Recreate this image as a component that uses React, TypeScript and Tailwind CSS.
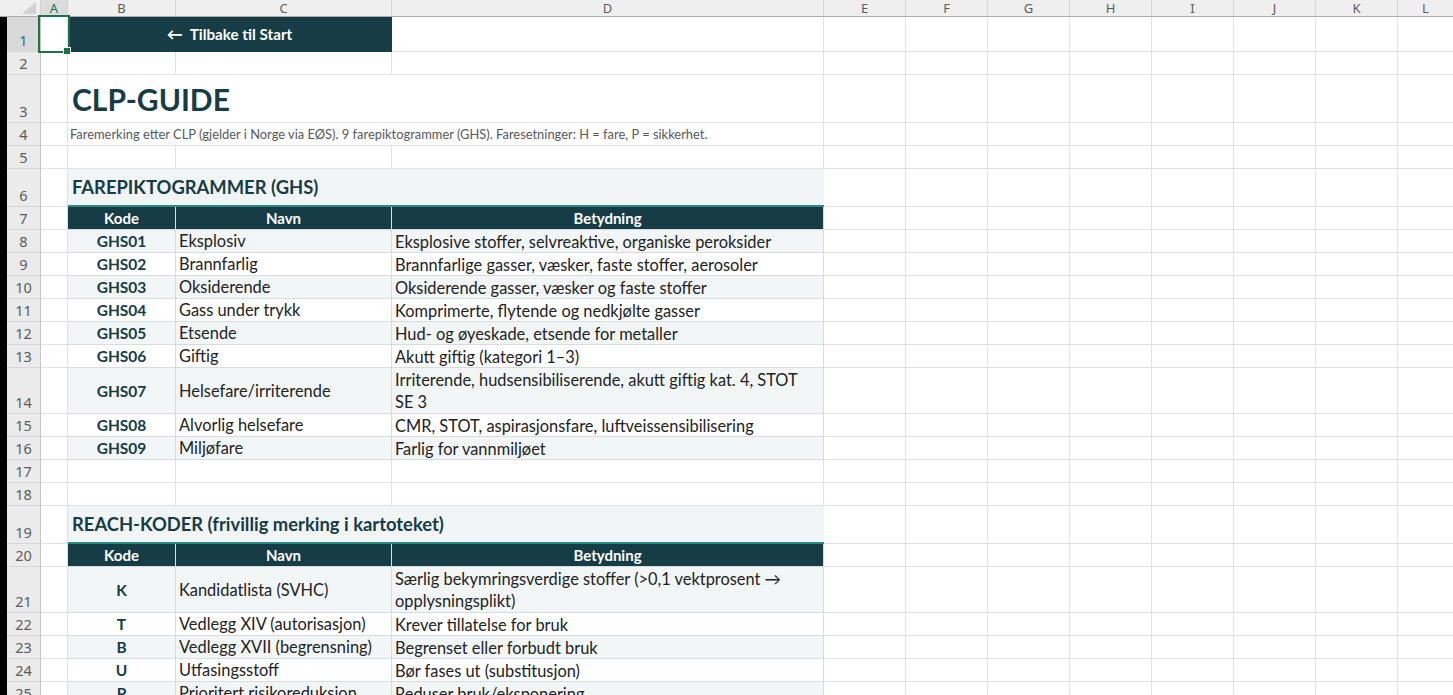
import React from "react";
import clsx from "clsx";

const DARK = "bg-[#163c45]";
const CELL_FONT = { fontFamily: "Lato, 'Liberation Sans', sans-serif" };

type GhsRow = { kode: string; navn: string; betydning: string[] };

const ghsRows: GhsRow[] = [
  { kode: "GHS01", navn: "Eksplosiv", betydning: ["Eksplosive stoffer, selvreaktive, organiske peroksider"] },
  { kode: "GHS02", navn: "Brannfarlig", betydning: ["Brannfarlige gasser, væsker, faste stoffer, aerosoler"] },
  { kode: "GHS03", navn: "Oksiderende", betydning: ["Oksiderende gasser, væsker og faste stoffer"] },
  { kode: "GHS04", navn: "Gass under trykk", betydning: ["Komprimerte, flytende og nedkjølte gasser"] },
  { kode: "GHS05", navn: "Etsende", betydning: ["Hud- og øyeskade, etsende for metaller"] },
  { kode: "GHS06", navn: "Giftig", betydning: ["Akutt giftig (kategori 1–3)"] },
  {
    kode: "GHS07",
    navn: "Helsefare/irriterende",
    betydning: ["Irriterende, hudsensibiliserende, akutt giftig kat. 4, STOT", "SE 3"],
  },
  { kode: "GHS08", navn: "Alvorlig helsefare", betydning: ["CMR, STOT, aspirasjonsfare, luftveissensibilisering"] },
  { kode: "GHS09", navn: "Miljøfare", betydning: ["Farlig for vannmiljøet"] },
];

const reachRows: GhsRow[] = [
  {
    kode: "K",
    navn: "Kandidatlista (SVHC)",
    betydning: ["Særlig bekymringsverdige stoffer (>0,1 vektprosent →", "opplysningsplikt)"],
  },
  { kode: "T", navn: "Vedlegg XIV (autorisasjon)", betydning: ["Krever tillatelse for bruk"] },
  { kode: "B", navn: "Vedlegg XVII (begrensning)", betydning: ["Begrenset eller forbudt bruk"] },
  { kode: "U", navn: "Utfasingsstoff", betydning: ["Bør fases ut (substitusjon)"] },
  { kode: "P", navn: "Prioritert risikoreduksjon", betydning: ["Reduser bruk/eksponering"] },
];

const tailCols = ["E", "F", "G", "H", "I", "J", "K"];

const Tail = () => (
  <>
    {tailCols.map((c) => (
      <div key={c} className="w-[82px] shrink-0 border-r border-b border-[#e1e1e1]" />
    ))}
    <div className="flex-1 border-b border-[#e1e1e1]" />
  </>
);

const RowShell = ({
  n,
  h,
  selected = false,
  children,
}: {
  n: number;
  h: string;
  selected?: boolean;
  children: React.ReactNode;
}) => (
  <div className={clsx("flex shrink-0", h)}>
    <div
      className={clsx(
        "w-[34px] shrink-0 flex items-end justify-center border-r border-r-[#c4c4c4] border-b border-b-[#d6d6d6] text-[14.5px] leading-[20px] pb-[1px]",
        selected ? "bg-[#d9d9d9] text-[#1e6e8a]" : "bg-[#ebebeb] text-[#5c5c5c]"
      )}
      style={{ fontFamily: "'Noto Sans', sans-serif" }}
    >
      {n}
    </div>
    <div className="w-[27px] shrink-0 border-r border-b border-[#e1e1e1]" />
    {children}
    <Tail />
  </div>
);

const BlankBCD = () => (
  <>
    <div className="w-[108px] shrink-0 border-r border-b border-[#e1e1e1]" />
    <div className="w-[216px] shrink-0 border-r border-b border-[#e1e1e1]" />
    <div className="w-[432px] shrink-0 border-r border-b border-[#e1e1e1]" />
  </>
);

const SectionRow = ({ n, title }: { n: number; title: string }) => (
  <RowShell n={n} h="h-[38px]">
    <div
      className="w-[756px] shrink-0 bg-[#f2f5f5] border-b-2 border-b-[#2b8a7f] flex items-end pl-[4px] pb-[3px] text-[18.4px] font-bold text-[#163c45]"
      style={CELL_FONT}
    >
      {title}
    </div>
  </RowShell>
);

const HeadRow = ({ n }: { n: number }) => (
  <RowShell n={n} h="h-[23px]">
    <div className={clsx("flex text-white font-bold text-[15px]", DARK)} style={CELL_FONT}>
      <div className="w-[108px] shrink-0 flex items-center justify-center pt-[1px] border-r border-r-[#d8e0e1] border-b border-b-[#d9dcdd]">
        Kode
      </div>
      <div className="w-[216px] shrink-0 flex items-center justify-center pt-[1px] border-r border-r-[#d8e0e1] border-b border-b-[#d9dcdd]">
        Navn
      </div>
      <div className="w-[432px] shrink-0 flex items-center justify-center pt-[1px] border-r border-r-[#d9dcdd] border-b border-b-[#d9dcdd]">
        Betydning
      </div>
    </div>
  </RowShell>
);

const DataRow = ({ n, row, shaded }: { n: number; row: GhsRow; shaded: boolean }) => {
  const tall = row.betydning.length > 1;
  const bg = shaded ? "bg-[#f2f6f6]" : "bg-white";
  return (
    <RowShell n={n} h={tall ? "h-[46px]" : "h-[23px]"}>
      <div className="flex text-[16.4px] text-[#222]" style={CELL_FONT}>
        <div
          className={clsx(
            "w-[108px] shrink-0 flex items-center justify-center pt-[2px] font-bold text-[15.5px] text-[#163c45] border-r border-b border-[#d9dcdd]",
            bg
          )}
        >
          {row.kode}
        </div>
        <div
          className={clsx("w-[216px] shrink-0 flex items-center pl-[3px] pt-[1px] border-r border-b border-[#d9dcdd]", bg)}
        >
          {row.navn}
        </div>
        <div
          className={clsx(
            "w-[432px] shrink-0 flex flex-col justify-center pl-[3px] pt-[1px] leading-[22px] border-r border-b border-[#d9dcdd]",
            bg
          )}
        >
          {row.betydning.map((l) => (
            <span key={l} className="whitespace-nowrap">
              {l}
            </span>
          ))}
        </div>
      </div>
    </RowShell>
  );
};

export default function App() {
  const ghsStart = 8;
  const reachStart = 21;
  return (
    <div className="w-[1453px] h-[695px] overflow-hidden bg-white flex flex-col relative select-none">
      {/* column headers */}
      <div
        className="flex h-[17px] shrink-0 bg-[#efefef] border-b border-[#acacac] text-[13px] leading-[16px] text-[#5c5c5c]"
        style={{ fontFamily: "'Noto Sans', sans-serif" }}
      >
        <div className="w-[41px] shrink-0 border-r border-[#d4d4d4] flex items-start justify-end pr-[4px] pt-[2px]">
          <svg width="14" height="12" viewBox="0 0 14 12">
            <polygon points="14,0 14,12 0,12" fill="#d2d2d2" />
          </svg>
        </div>
        {[
          { c: "A", w: "w-[27px]" },
          { c: "B", w: "w-[108px]" },
          { c: "C", w: "w-[216px]" },
          { c: "D", w: "w-[432px]" },
          ...tailCols.map((c) => ({ c, w: "w-[82px]" })),
        ].map(({ c, w }) => (
          <div
            key={c}
            className={clsx(
              w,
              "shrink-0 border-r border-[#d4d4d4] flex justify-center",
              c === "A" && "bg-[#dcdcdc] text-[#1e6e5a]"
            )}
          >
            {c}
          </div>
        ))}
        <div className="flex-1 flex justify-center">L</div>
      </div>

      <div className="flex flex-1 min-h-0">
        <div className="w-[7px] shrink-0 bg-black" />
        <div className="flex-1 flex flex-col min-w-0">
          {/* row 1 */}
          <RowShell n={1} h="h-[35px]" selected>
            <div
              className={clsx(
                "w-[324px] shrink-0 flex items-center justify-center gap-[7px] text-white font-bold text-[15.2px] border-r border-b border-[#163c45]",
                DARK
              )}
              style={CELL_FONT}
            >
              <span className="text-[16px] leading-none font-black">←</span>
              <span>Tilbake til Start</span>
            </div>
            <div className="w-[432px] shrink-0 border-r border-b border-[#e1e1e1]" />
          </RowShell>

          <RowShell n={2} h="h-[23px]">
            <BlankBCD />
          </RowShell>

          <RowShell n={3} h="h-[48px]">
            <div
              className="w-[756px] shrink-0 border-r border-b border-[#e1e1e1] flex items-end pl-[4px] pb-[3px] text-[30px] font-bold text-[#163c45] leading-[40px]"
              style={CELL_FONT}
            >
              CLP-GUIDE
            </div>
          </RowShell>

          <RowShell n={4} h="h-[23px]">
            <div
              className="w-[756px] shrink-0 border-r border-b border-[#e1e1e1] flex items-center pl-[2px] pt-[1px] text-[12.9px] text-[#595959]"
              style={CELL_FONT}
            >
              Faremerking etter CLP (gjelder i Norge via EØS). 9 farepiktogrammer (GHS). Faresetninger: H = fare, P =
              sikkerhet.
            </div>
          </RowShell>

          <RowShell n={5} h="h-[23px]">
            <BlankBCD />
          </RowShell>

          <SectionRow n={6} title="FAREPIKTOGRAMMER (GHS)" />
          <HeadRow n={7} />
          {ghsRows.map((r, i) => (
            <DataRow key={r.kode} n={ghsStart + i} row={r} shaded={i % 2 === 0} />
          ))}

          <RowShell n={17} h="h-[23px]">
            <BlankBCD />
          </RowShell>
          <RowShell n={18} h="h-[23px]">
            <BlankBCD />
          </RowShell>

          <SectionRow n={19} title="REACH-KODER (frivillig merking i kartoteket)" />
          <HeadRow n={20} />
          {reachRows.map((r, i) => (
            <DataRow key={r.kode} n={reachStart + i} row={r} shaded={i % 2 === 0} />
          ))}
        </div>
      </div>

      {/* active cell A1 */}
      <div className="absolute left-[38px] top-[15px] w-[32px] h-[38px] border-2 border-[#1e7145]" />
      <div className="absolute left-[63px] top-[47px] w-[8px] h-[8px] bg-[#1e7145] border border-white" />
    </div>
  );
}
